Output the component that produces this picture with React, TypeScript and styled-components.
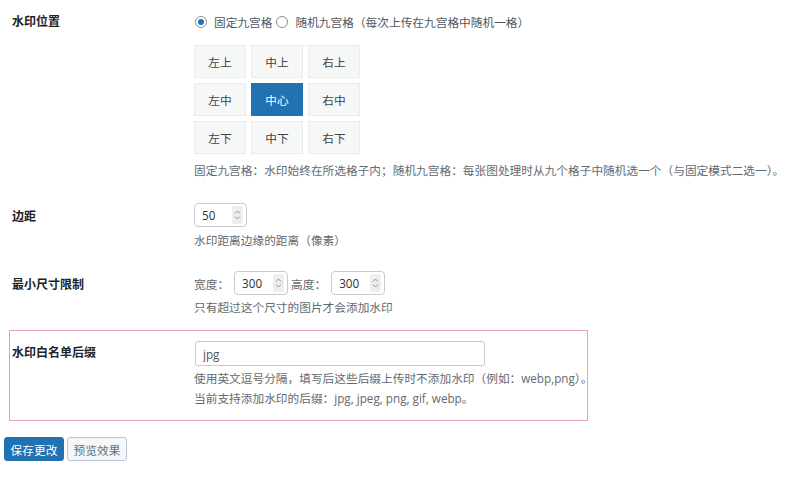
import React from "react";
import styled, { createGlobalStyle } from "styled-components";

const GlobalStyle = createGlobalStyle`
  html, body {
    margin: 0;
    padding: 0;
    background: #ffffff;
  }
  body {
    font-family: "Open Sans", "Noto Sans CJK SC", sans-serif;
    font-size: 11.7px;
    color: #3c434a;
  }
`;

const positions = ["左上", "中上", "右上", "左中", "中心", "右中", "左下", "中下", "右下"];

const Spinner = () => (
  <SpinnerBox>
    <svg width="7" height="12" viewBox="0 0 7 12">
      <path d="M1 4.5 L3.5 2 L6 4.5" fill="none" stroke="#8c8f94" strokeWidth="1" />
      <path d="M1 7.5 L3.5 10 L6 7.5" fill="none" stroke="#8c8f94" strokeWidth="1" />
    </svg>
  </SpinnerBox>
);

const NumberField = ({ value, width }: { value: string; width: number }) => (
  <NumberBox $width={width}>
    <NumberInput readOnly value={value} />
    <Spinner />
  </NumberBox>
);

export default function App() {
  return (
    <Page>
      <GlobalStyle />
      <FormTable>
        <Row $top={12}>
          <Label $offset={1}>水印位置</Label>
          <Field>
            <RadioGroup>
              <RadioOption>
                <RadioDot $checked />
                固定九宫格
              </RadioOption>
              <RadioOption>
                <RadioDot />
                随机九宫格（每次上传在九宫格中随机一格）
              </RadioOption>
            </RadioGroup>
            <Grid>
              {positions.map((p) => (
                <Cell key={p} $active={p === "中心"}>
                  {p}
                </Cell>
              ))}
            </Grid>
            <Desc $gap={7}>
              固定九宫格：水印始终在所选格子内；随机九宫格：每张图处理时从九个格子中随机选一个（与固定模式二选一）。
            </Desc>
          </Field>
        </Row>

        <Row $top={24}>
          <Label $offset={5}>边距</Label>
          <Field>
            <NumberField value="50" width={53} />
            <Desc $gap={4}>水印距离边缘的距离（像素）</Desc>
          </Field>
        </Row>

        <Row $top={22}>
          <Label $offset={5}>最小尺寸限制</Label>
          <Field>
            <Inline>
              <InlineLabel>宽度：</InlineLabel>
              <NumberField value="300" width={54} />
              <InlineLabel>高度：</InlineLabel>
              <NumberField value="300" width={54} />
            </Inline>
            <Desc $gap={3}>只有超过这个尺寸的图片才会添加水印</Desc>
          </Field>
        </Row>

        <Row $top={10} $highlight>
          <Label $offset={3}>水印白名单后缀</Label>
          <Field>
            <TextInput readOnly value="jpg" />
            <Desc $gap={2} $lh={20}>
              使用英文逗号分隔，填写后这些后缀上传时不添加水印（例如：webp,png）。
              <br />
              当前支持添加水印的后缀：jpg, jpeg, png, gif, webp。
            </Desc>
          </Field>
        </Row>
      </FormTable>

      <Actions>
        <Button $primary>保存更改</Button>
        <Button>预览效果</Button>
      </Actions>
    </Page>
  );
}

const Page = styled.div`
  width: 800px;
  height: 481px;
  padding: 0 4px;
  box-sizing: border-box;
  overflow: hidden;
`;

const FormTable = styled.div`
  display: flex;
  flex-direction: column;
`;

const Row = styled.div<{ $top: number; $highlight?: boolean }>`
  display: flex;
  align-items: flex-start;
  padding-top: ${(p) => p.$top}px;
  ${(p) =>
    p.$highlight
      ? `
    margin: 14px 0 0 5px;
    width: 579px;
    box-sizing: border-box;
    border: 1px solid #e3a4aa;
    padding-left: 2px;
    padding-bottom: 12px;
  `
      : `
    padding-left: 8px;
  `}
`;

const Label = styled.div<{ $offset: number }>`
  width: 182px;
  flex-shrink: 0;
  font-weight: 700;
  font-size: 12px;
  color: #1d2327;
  line-height: 18px;
  padding-top: ${(p) => p.$offset}px;
`;

const Field = styled.div`
  display: flex;
  flex-direction: column;
  align-items: flex-start;
`;

const RadioGroup = styled.div`
  display: flex;
  align-items: center;
  height: 20px;
  gap: 3px;
`;

const RadioOption = styled.label`
  display: flex;
  align-items: center;
  gap: 7px;
  color: #50575e;
  line-height: 18px;
`;

const RadioDot = styled.span<{ $checked?: boolean }>`
  width: 12px;
  height: 12px;
  box-sizing: border-box;
  border-radius: 50%;
  border: 1px solid #8c8f94;
  display: flex;
  align-items: center;
  justify-content: center;
  margin-left: 1px;
  &::after {
    content: "";
    width: 6px;
    height: 6px;
    border-radius: 50%;
    background: ${(p) => (p.$checked ? "#2271b1" : "transparent")};
  }
`;

const Grid = styled.div`
  display: grid;
  grid-template-columns: repeat(3, 52px);
  grid-auto-rows: 33px;
  gap: 5px;
  margin-top: 13px;
`;

const Cell = styled.div<{ $active?: boolean }>`
  display: flex;
  align-items: center;
  justify-content: center;
  box-sizing: border-box;
  background: ${(p) => (p.$active ? "#2271b1" : "#f6f7f7")};
  border: 1px solid ${(p) => (p.$active ? "#2271b1" : "#ebebeb")};
  color: ${(p) => (p.$active ? "#ffffff" : "#3c434a")};
`;

const Desc = styled.p<{ $gap: number; $lh?: number }>`
  margin: ${(p) => p.$gap}px 0 0;
  color: #646970;
  line-height: ${(p) => p.$lh ?? 18}px;
  white-space: nowrap;
`;

const NumberBox = styled.div<{ $width: number }>`
  width: ${(p) => p.$width}px;
  height: 24px;
  box-sizing: border-box;
  border: 1px solid #c8cacd;
  border-radius: 4px;
  display: flex;
  align-items: center;
  padding: 0 3px 0 7px;
  background: #fff;
`;

const NumberInput = styled.input`
  flex: 1;
  min-width: 0;
  border: none;
  outline: none;
  padding: 0;
  font: inherit;
  color: #2c3338;
  background: transparent;
`;

const SpinnerBox = styled.span`
  width: 11px;
  height: 18px;
  border-radius: 2px;
  background: #eeeeee;
  display: flex;
  align-items: center;
  justify-content: center;
`;

const Inline = styled.div`
  display: flex;
  align-items: center;
  gap: 3px;
`;

const InlineLabel = styled.span`
  color: #646970;
  margin-right: 2px;
`;

const TextInput = styled.input`
  width: 290px;
  height: 25px;
  box-sizing: border-box;
  border: 1px solid #c8cacd;
  border-radius: 3px;
  padding: 0 7px;
  font: inherit;
  color: #50575e;
  outline: none;
  margin-left: 1px;
`;

const Actions = styled.div`
  display: flex;
  gap: 3px;
  margin-top: 16px;
`;

const Button = styled.button<{ $primary?: boolean }>`
  width: 60px;
  height: 24px;
  box-sizing: border-box;
  border-radius: 3px;
  font: inherit;
  padding: 0;
  border: 1px solid ${(p) => (p.$primary ? "#2271b1" : "#b6c6d6")};
  background: ${(p) => (p.$primary ? "#2271b1" : "#f6f7f7")};
  color: ${(p) => (p.$primary ? "#ffffff" : "#5b7188")};
`;
